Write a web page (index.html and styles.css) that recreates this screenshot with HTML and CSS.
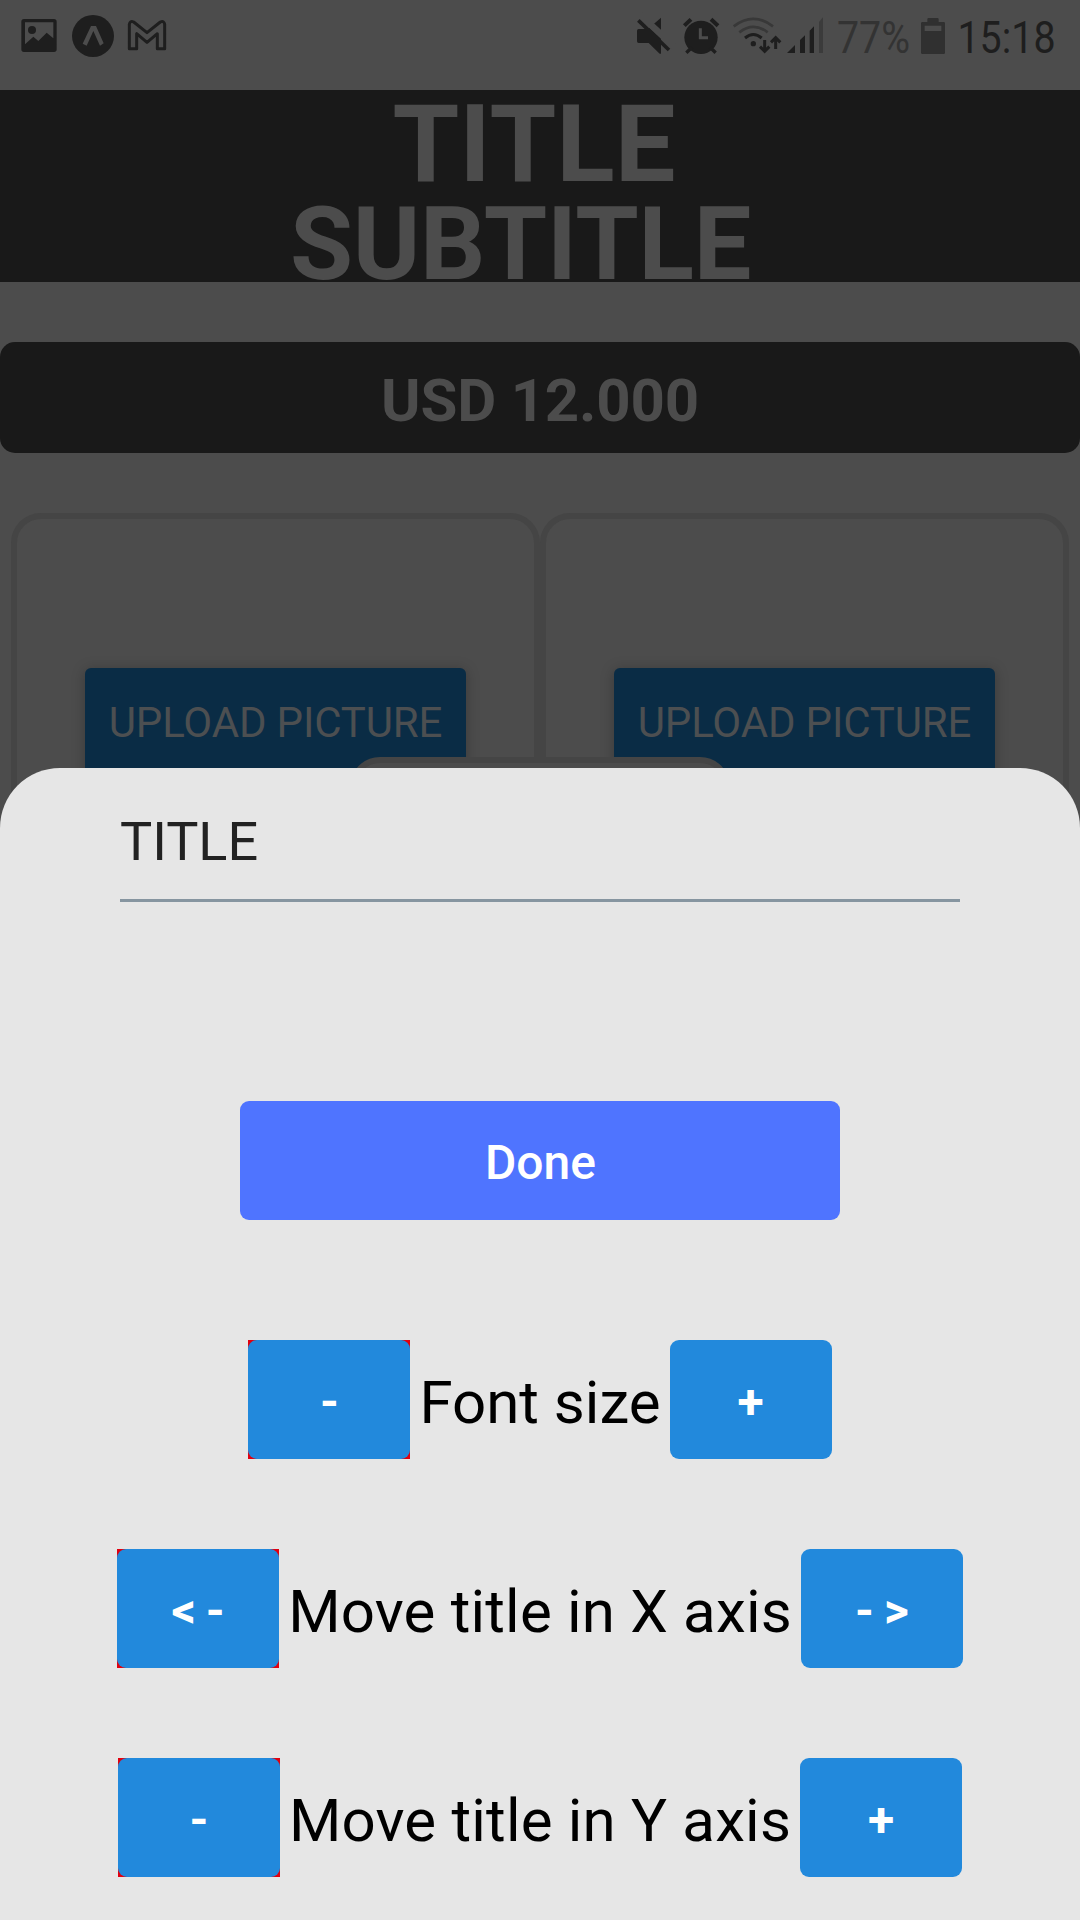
FILE: index.html
```html
<!DOCTYPE html>
<html lang="en">
<head>
<meta charset="utf-8">
<title>Title editor</title>
<link rel="stylesheet" href="styles.css">
</head>
<body>
<div class="screen">
  <header class="status">
    <svg class="status-left" width="150" height="90" viewBox="60 0 450 270">
      <path class="ink" fill-rule="evenodd" d="M72 57H162a8 8 0 0 1 8 8V148a8 8 0 0 1-8 8H72a8 8 0 0 1-8-8V65a8 8 0 0 1 8-8ZM75 67V133L100 110L115 123L140 98L160 115V67Z"/>
      <circle class="ink" cx="96" cy="90" r="12"/>
      <circle class="ink" cx="279" cy="108" r="63"/>
      <path class="paper" d="M273 78H288L311 130L300 137L280 93L260 137L248 131Z"/>
      <path class="line" stroke-width="9" stroke-linejoin="round" d="M388 146V73Q390 61 401 66L441 98L481 66Q492 61 494 73V146H472V101L441 127L410 101V146Z"/>
    </svg>
    <div class="status-right">
      <svg width="193" height="90" viewBox="45 0 579 270">
        <path class="ink" d="M56 87H84L123 53V161H119L86 129H56a5 5 0 0 1-5-5V92a5 5 0 0 1 5-5Z"/>
        <path class="gap" stroke-width="20" d="M59 44L161 138"/>
        <path class="line" stroke-width="11" d="M55 61L147 150"/>
        <circle class="ink" cx="243" cy="112" r="50"/>
        <path class="line" stroke-width="12" d="M193 77L213 58M273 58L294 77"/>
        <path class="line" stroke-width="10" d="M199 158L216 142M287 158L270 142"/>
        <path class="gap" stroke-width="9" d="M241 85V113H264"/>
        <path class="line dim" stroke-width="8" d="M341 79Q400 34 459 79M358 97Q400 64 443 97"/>
        <path class="line" stroke-width="9" d="M375 114Q400 93 425 114"/>
        <circle class="ink" cx="400" cy="131" r="8"/>
        <path class="line" stroke-width="9" d="M434 120V153M420 140L434 154L448 140M467 147V114M453 127L467 113L481 127"/>
        <path class="ink" d="M501 159L525 135V159ZM540 159V120L555 106V159ZM569 159V92L582 79V159Z"/>
        <path class="faint" d="M597 159V66L609 52V159Z"/>
      </svg>
      <svg width="84" height="90" viewBox="0 0 84 90"><text class="battery-text" x="9" y="53" textLength="73" lengthAdjust="spacingAndGlyphs">77%</text></svg>
      <svg class="battery" width="24" height="90" viewBox="303 0 72 270"><path fill-rule="evenodd" d="M307 66H322V58Q322 54 326 54H352Q356 54 356 58V66H371Q375 66 375 70V158Q375 162 371 162H307Q303 162 303 158V70Q303 66 307 66ZM314 77V93H364V77Z"/></svg>
      <svg width="135" height="90" viewBox="0 0 135 90"><text class="clock" x="12.5" y="53" textLength="98" lengthAdjust="spacingAndGlyphs">15:18</text></svg>
    </div>
  </header>
  <div class="banner">
    <div class="title">TITLE</div>
    <div class="subtitle">SUBTITLE</div>
  </div>
  <div class="price">USD 12.000</div>
  <div class="cards">
    <div class="card"><div class="upload">UPLOAD PICTURE</div></div>
    <div class="card"><div class="upload">UPLOAD PICTURE</div></div>
    <div class="center-card"></div>
  </div>
  <section class="sheet">
    <div class="field">TITLE</div>
    <button class="btn done">Done</button>
    <div class="row"><span class="red"><button class="btn">-</button></span><span class="label">Font size</span><button class="btn">+</button></div>
    <div class="row"><span class="red"><button class="btn">&lt; -</button></span><span class="label wide">Move title in X axis</span><button class="btn">- &gt;</button></div>
    <div class="row"><span class="red"><button class="btn">-</button></span><span class="label wide">Move title in Y axis</span><button class="btn">+</button></div>
  </section>
</div>
</body>
</html>
```
FILE: styles.css
```css
* { box-sizing: border-box; }
body { margin: 0; font-family: Roboto, "Liberation Sans", sans-serif; }
.screen { position: relative; width: 1080px; height: 1920px; overflow: hidden; background: #4c4c4c; }
.status { display: flex; justify-content: space-between; height: 90px; padding-left: 20px; }
.status-right { display: flex; }
.status svg { display: block; }
.ink { fill: #1e1e1e; }
.paper { fill: #4c4c4c; }
.line { fill: none; stroke: #1e1e1e; }
.gap { fill: none; stroke: #4c4c4c; }
.dim { stroke: #383838; }
.faint { fill: #3b3b3b; }
.battery { fill: #303030; margin-left: 9px; }
.battery-text { font-size: 44px; fill: #333; }
.clock { font-size: 44px; fill: #1e1e1e; }
.banner { height: 192px; padding-top: 1px; background: #191919; color: #4c4c4c; font-weight: 700; text-align: center; }
.title { font-size: 108px; line-height: 106px; padding-right: 12px; }
.subtitle { font-size: 102.5px; line-height: 94px; padding-right: 39px; letter-spacing: -0.3px; }
.price { height: 111px; margin-top: 60px; border-radius: 15px; background: #191919; color: #4c4c4c; font-size: 60px; font-weight: 700; line-height: 118px; letter-spacing: -0.2px; text-align: center; }
.cards { position: relative; display: flex; margin: 60px 11px 0; }
.card { width: 529px; height: 600px; padding: 149px 0 0 68px; border: 6px solid #454545; border-radius: 30px; }
.upload { width: 381px; height: 108px; border-radius: 6px; background: #0a2c45; color: #4c4f51; font-size: 42px; line-height: 109px; letter-spacing: -0.15px; text-align: center; box-shadow: 0 2px 14px rgba(0, 0, 0, .25); }
.center-card { position: absolute; left: 339px; top: 244px; width: 380px; height: 300px; border: 6px solid #454545; border-radius: 30px; background: #4c4c4c; }
.sheet { position: absolute; inset: 768px 0 0; display: flex; flex-direction: column; align-items: center; border-radius: 60px 60px 0 0; background: #e6e6e6; }
.field { width: 840px; height: 134px; border-bottom: 3px solid #8695a0; color: #222; font-size: 54px; line-height: 148px; }
.btn { display: block; width: 162px; height: 119px; padding: 5px 0 0; border: 0; border-radius: 9px; background: #2289dc; color: #fff; font: 700 48px/1 Roboto, "Liberation Sans", sans-serif; word-spacing: -2px; }
.done { width: 600px; margin: 199px 0 30px; padding-left: 1px; background: #4f74ff; font-weight: 500; }
.row { display: flex; align-items: center; height: 119px; margin-top: 90px; }
.red { background: #e1000f; }
.label { padding: 6px 9px 0; color: #000; font-size: 60px; line-height: 70px; white-space: nowrap; }
.wide { letter-spacing: 0.2px; }
```
